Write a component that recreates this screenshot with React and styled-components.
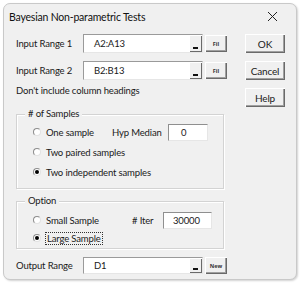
import React from 'react';
import styled, { createGlobalStyle } from 'styled-components';

const GlobalStyle = createGlobalStyle`
  html, body { margin: 0; padding: 0; background: #ffffff; }
  body {
    font-family: Lato, "Noto Sans", sans-serif;
    font-size: 9.5px;
    letter-spacing: -0.15px;
    color: #1a1a1a;
  }
`;

const Page = styled.div`
  width: 300px;
  height: 283px;
  padding: 3px 0 0 3px;
  box-sizing: border-box;
`;

const Window = styled.div`
  width: 294px;
  height: 277px;
  box-sizing: border-box;
  background: #f0f0f0;
  border: 1px solid #c9c9c9;
  border-radius: 7px;
  box-shadow: 1px 1px 2px rgba(0, 0, 0, 0.18);
  display: flex;
  flex-direction: column;
`;

const TitleBar = styled.div`
  height: 25px;
  flex: none;
  display: flex;
  align-items: center;
  justify-content: space-between;
  padding: 0 18px 0 5px;
  font-size: 10.5px;
  letter-spacing: -0.2px;
  color: #111;
`;

const Body = styled.div`
  display: flex;
  padding: 5px 0 0 12px;
`;

const Main = styled.div`
  width: 211px;
  display: flex;
  flex-direction: column;
`;

const Side = styled.div`
  margin-left: 18px;
  display: flex;
  flex-direction: column;
  gap: 8px;
`;

const Row = styled.div`
  display: flex;
  align-items: center;
  height: ${p => p.h || 19}px;
  margin-top: ${p => p.mt || 0}px;
`;

const Label = styled.span`
  width: ${p => p.w || 67}px;
  flex: none;
  white-space: nowrap;
`;

const RefEdit = styled.div`
  width: 120px;
  height: ${p => p.h || 19}px;
  box-sizing: border-box;
  display: flex;
  background: #fff;
  border: 1px solid;
  border-color: #9a9a9a #e6e6e6 #e6e6e6 #9a9a9a;
`;

const RefText = styled.span`
  flex: 1;
  padding-left: 10px;
  display: flex;
  align-items: center;
`;

const RefButton = styled.span`
  width: 13px;
  flex: none;
  position: relative;
  background: #f0f0f0;
  box-shadow: inset 1px 1px #fff, inset -1px -1px #6a6a6a;
  &::after {
    content: '';
    position: absolute;
    left: 4px;
    bottom: 3px;
    width: 5px;
    height: 2px;
    background: #111;
  }
`;

const SmallButton = styled.span`
  width: 22px;
  height: 17px;
  margin-left: 2px;
  box-sizing: border-box;
  display: flex;
  align-items: center;
  justify-content: center;
  font-family: "Noto Sans", sans-serif;
  font-size: 5.5px;
  font-weight: 700;
  letter-spacing: 0;
  color: #333;
  background: #f0f0f0;
  box-shadow: inset 1px 1px #fff, inset -1px -1px #6a6a6a, inset -2px -2px #a0a0a0;
`;

const Button = styled.span`
  width: 40px;
  height: 19px;
  box-sizing: border-box;
  display: flex;
  align-items: center;
  justify-content: center;
  font-size: 10px;
  background: #f0f0f0;
  box-shadow: inset 1px 1px #fff, inset -1px -1px #6a6a6a, inset -2px -2px #a0a0a0;
`;

const Note = styled.div`
  margin-top: 4px;
  line-height: 14px;
`;

const Frame = styled.div`
  position: relative;
  width: 208px;
  height: ${p => p.h}px;
  margin-top: ${p => p.mt}px;
  box-sizing: border-box;
  border: 1px solid #d3d3d3;
  box-shadow: inset 1px 1px #fff, 1px 1px #fff;
  padding: ${p => p.pt}px 0 0 16px;
  display: flex;
  flex-direction: column;
`;

const Legend = styled.span`
  position: absolute;
  top: -8px;
  left: 8px;
  padding: 0 3px;
  background: #f0f0f0;
  line-height: 14px;
`;

const Radio = styled.span`
  width: 8px;
  height: 8px;
  box-sizing: border-box;
  flex: none;
  border-radius: 50%;
  margin-right: 5px;
  background: #fff;
  border: 1px solid #8c8c8c;
  border-right-color: #e2e2e2;
  border-bottom-color: #e2e2e2;
  display: flex;
  align-items: center;
  justify-content: center;
  &::after {
    content: '';
    width: 4px;
    height: 4px;
    border-radius: 50%;
    background: ${p => (p.on ? '#000' : 'transparent')};
  }
`;

const Choice = styled.span`
  display: flex;
  align-items: center;
  width: ${p => (p.w ? `${p.w}px` : 'auto')};
  flex: none;
  white-space: nowrap;
`;

const Focus = styled.span`
  outline: 1px dotted #333;
  padding: 0 1px;
`;

const Box = styled.span`
  width: ${p => p.w}px;
  height: 17px;
  box-sizing: border-box;
  background: #fff;
  border: 1px solid;
  border-color: #8f8f8f #e6e6e6 #e6e6e6 #8f8f8f;
  padding-left: ${p => p.pl}px;
  display: flex;
  align-items: center;
`;

const Close = () => (
  <svg width="11" height="11" viewBox="0 0 11 11">
    <path d="M1 1L10 10M10 1L1 10" stroke="#222" strokeWidth="1" fill="none" />
  </svg>
);

export default function App() {
  return (
    <Page>
      <GlobalStyle />
      <Window>
        <TitleBar>
          <span>Bayesian Non-parametric Tests</span>
          <Close />
        </TitleBar>
        <Body>
          <Main>
            <Row>
              <Label>Input Range 1</Label>
              <RefEdit>
                <RefText>A2:A13</RefText>
                <RefButton />
              </RefEdit>
              <SmallButton>Fil</SmallButton>
            </Row>
            <Row mt={8}>
              <Label>Input Range 2</Label>
              <RefEdit>
                <RefText>B2:B13</RefText>
                <RefButton />
              </RefEdit>
              <SmallButton>Fil</SmallButton>
            </Row>
            <Note>Don't include column headings</Note>
            <Frame h={75} mt={16} pt={7}>
              <Legend># of Samples</Legend>
              <Row h={20}>
                <Choice w={79}><Radio />One sample</Choice>
                <Label w={56}>Hyp Median</Label>
                <Box w={40} pl={12}>0</Box>
              </Row>
              <Row h={20}>
                <Choice><Radio />Two paired samples</Choice>
              </Row>
              <Row h={20}>
                <Choice><Radio on />Two independent samples</Choice>
              </Row>
            </Frame>
            <Frame h={48} mt={12} pt={9}>
              <Legend>Option</Legend>
              <Row h={18}>
                <Choice w={99}><Radio />Small Sample</Choice>
                <Label w={31}># Iter</Label>
                <Box w={49} pl={9}>30000</Box>
              </Row>
              <Row h={18}>
                <Choice><Radio on /><Focus>Large Sample</Focus></Choice>
              </Row>
            </Frame>
            <Row mt={8} h={17}>
              <Label>Output Range</Label>
              <RefEdit h={17}>
                <RefText>D1</RefText>
                <RefButton />
              </RefEdit>
              <SmallButton>New</SmallButton>
            </Row>
          </Main>
          <Side>
            <Button>OK</Button>
            <Button>Cancel</Button>
            <Button>Help</Button>
          </Side>
        </Body>
      </Window>
    </Page>
  );
}
